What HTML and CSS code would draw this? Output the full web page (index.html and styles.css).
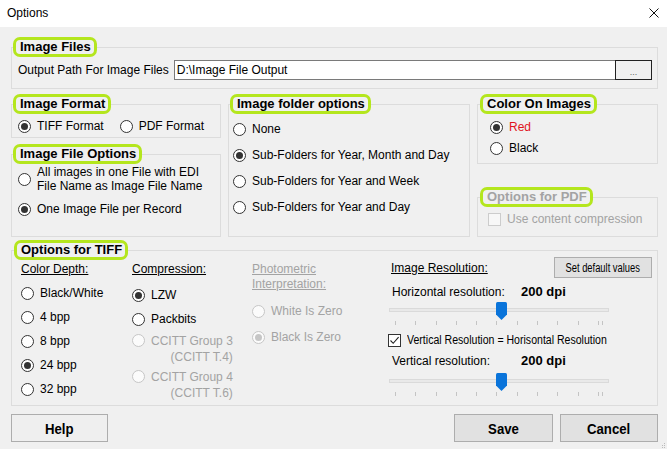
FILE: index.html
```html
<!DOCTYPE html>
<html>
<head>
<meta charset="utf-8">
<title>Options</title>
<link rel="stylesheet" href="styles.css">
</head>
<body>
<div class="window">
  <header class="titlebar">
    <span class="title">Options</span>
    <svg class="close" width="10" height="10" viewBox="0 0 10 10"><path d="M0.5 0.5L9.5 9.5M9.5 0.5L0.5 9.5" stroke="#111" stroke-width="1" fill="none"/></svg>
  </header>
  <main class="content">
    <fieldset class="group g-files">
      <legend class="hl">Image Files</legend>
      <div class="path-row">
        <span class="path-label">Output Path For Image Files</span>
        <span class="textbox">D:\Image File Output</span>
        <span class="browse">...</span>
      </div>
    </fieldset>

    <div class="row2">
      <div class="col col-left">
        <fieldset class="group g-format">
          <legend class="hl">Image Format</legend>
          <div class="inline-opts">
            <span class="opt"><span class="radio on"></span>TIFF Format</span>
            <span class="opt"><span class="radio"></span>PDF Format</span>
          </div>
        </fieldset>
        <fieldset class="group g-fileopts">
          <legend class="hl">Image File Options</legend>
          <div class="opt opt-multi"><span class="radio"></span><span>All images in one File with EDI<br>File Name as Image File Name</span></div>
          <div class="opt opt-single"><span class="radio on"></span>One Image File per Record</div>
        </fieldset>
      </div>

      <fieldset class="group g-folder">
        <legend class="hl">Image folder options</legend>
        <div class="opt folder-opt"><span class="radio"></span>None</div>
        <div class="opt folder-opt"><span class="radio on"></span>Sub-Folders for Year, Month and Day</div>
        <div class="opt folder-opt"><span class="radio"></span>Sub-Folders for Year and Week</div>
        <div class="opt folder-opt"><span class="radio"></span>Sub-Folders for Year and Day</div>
      </fieldset>

      <div class="col col-right">
        <fieldset class="group g-color">
          <legend class="hl">Color On Images</legend>
          <div class="opt color-opt red"><span class="radio on"></span>Red</div>
          <div class="opt color-opt color-black"><span class="radio"></span>Black</div>
        </fieldset>
        <fieldset class="group g-pdf">
          <legend class="hl dis-text">Options for PDF</legend>
          <div class="opt check-opt dis-text"><span class="checkbox dis"></span>Use content compression</div>
        </fieldset>
      </div>
    </div>

    <fieldset class="group g-tiff">
      <legend class="hl">Options for TIFF</legend>
      <div class="tiff-grid">
        <div class="tcol depth">
          <div class="ulabel">Color Depth:</div>
          <div class="opt trow first"><span class="radio"></span>Black/White</div>
          <div class="opt trow"><span class="radio"></span>4 bpp</div>
          <div class="opt trow"><span class="radio"></span>8 bpp</div>
          <div class="opt trow"><span class="radio on"></span>24 bpp</div>
          <div class="opt trow"><span class="radio"></span>32 bpp</div>
        </div>
        <div class="tcol compression">
          <div class="ulabel">Compression:</div>
          <div class="opt trow c-first"><span class="radio on"></span>LZW</div>
          <div class="opt trow"><span class="radio"></span>Packbits</div>
          <div class="opt ccitt dis-text"><span class="radio dis"></span><span class="ccitt-text">CCITT Group 3<br>(CCITT T.4)</span></div>
          <div class="opt ccitt ccitt2 dis-text"><span class="radio dis"></span><span class="ccitt-text">CCITT Group 4<br>(CCITT T.6)</span></div>
        </div>
        <div class="tcol photometric dis-text">
          <div class="ulabel two">Photometric<br>Interpretation:</div>
          <div class="opt trow p-first"><span class="radio dis"></span>White Is Zero</div>
          <div class="opt trow p-second"><span class="radio dis on"></span>Black Is Zero</div>
        </div>
        <div class="tcol resolution">
          <div class="res-head">
            <span class="ulabel">Image Resolution:</span>
            <span class="btn small-btn"><span class="cond-small">Set default values</span></span>
          </div>
          <div class="res-row hres"><span class="res-name">Horizontal resolution:</span><b class="res-val">200 dpi</b></div>
          <div class="slider s1">
            <span class="track"></span>
            <span class="ticks"><i></i><i></i><i></i><i></i><i></i><i></i><i></i><i></i><i></i><i></i><i class="dbl"></i></span>
            <svg class="thumb" style="left:107px" width="11" height="18" viewBox="0 0 11 18"><path d="M0 1.5Q0 0 1.5 0H9.5Q11 0 11 1.5V12.5L5.5 18L0 12.5Z" fill="#0a74da"/></svg>
          </div>
          <div class="opt check-opt linked"><span class="checkbox"><svg width="11" height="11" viewBox="0 0 11 11"><path d="M1.5 5.5L4.2 8.3L9.6 2.2" stroke="#222" stroke-width="1.1" fill="none"/></svg></span><span class="narrow">Vertical Resolution = Horisontal Resolution</span></div>
          <div class="res-row vres"><span class="res-name">Vertical resolution:</span><b class="res-val">200 dpi</b></div>
          <div class="slider s2">
            <span class="track"></span>
            <span class="ticks"><i></i><i></i><i></i><i></i><i></i><i></i><i></i><i></i><i></i><i></i><i class="dbl"></i></span>
            <svg class="thumb" style="left:107px" width="11" height="18" viewBox="0 0 11 18"><path d="M0 1.5Q0 0 1.5 0H9.5Q11 0 11 1.5V12.5L5.5 18L0 12.5Z" fill="#0a74da"/></svg>
          </div>
        </div>
      </div>
    </fieldset>

    <footer class="actions">
      <span class="btn big-btn help"><span class="cond-big">Help</span></span>
      <span class="spacer"></span>
      <span class="btn big-btn save"><span class="cond-big">Save</span></span>
      <span class="btn big-btn cancel"><span class="cond-big">Cancel</span></span>
    </footer>
  </main>
  <svg class="grip" width="5" height="5" viewBox="0 0 5 5"><rect x="3" y="0" width="1" height="1" fill="#bbb"/><rect x="1" y="2" width="1" height="1" fill="#bbb"/><rect x="3" y="2" width="1" height="1" fill="#bbb"/><rect x="1" y="4" width="1" height="1" fill="#bbb"/><rect x="3" y="4" width="1" height="1" fill="#bbb"/></svg>
</div>
</body>
</html>
```

FILE: styles.css
```css
html, body {
  margin: 0;
  padding: 0;
  background: #f0f0f0;
}

.window {
  position: relative;
  width: 667px;
  height: 449px;
  overflow: hidden;
  background: #f0f0f0;
  font-family: "Liberation Sans", Arial, sans-serif;
  font-size: 12px;
  color: #000;
}

.titlebar {
  height: 27px;
  box-sizing: border-box;
  background: #fff;
  display: flex;
  align-items: center;
  justify-content: space-between;
  padding: 0 8px 2px 7px;
}

.title {
  font-size: 12px;
}

.content {
  padding: 10px 9px 0 11px;
}

.group {
  margin: 0;
  padding: 0 5px 0 6px;
  border: 1px solid #dcdcdc;
  min-width: 0;
  box-sizing: border-box;
}

.hl {
  margin-left: -5px;
  padding: 0 3px 0 4px;
  border: 3px solid #b4e61e;
  border-radius: 7px;
  font-weight: bold;
  font-size: 13px;
  line-height: 14px;
  background: #f0f0f0;
}

.dis-text {
  color: #a3a3a3;
}

/* Image files */
.g-files {
  padding: 3px 5px 8px 6px;
}

.path-row {
  display: flex;
  align-items: center;
  height: 20px;
}

.path-label {
  margin-right: 5px;
  white-space: nowrap;
}

.textbox {
  flex: 1;
  height: 20px;
  box-sizing: border-box;
  border: 1px solid #7a7a7a;
  background: #fff;
  padding-left: 2px;
  line-height: 18px;
}

.browse {
  width: 37px;
  height: 20px;
  box-sizing: border-box;
  border: 1px solid #222;
  margin-left: -1px;
  background: #f0f0f0;
  display: flex;
  align-items: flex-end;
  justify-content: center;
  font-size: 9px;
  line-height: 13px;
  color: #666;
}

/* Radios & checkboxes */
.opt {
  display: flex;
  align-items: center;
  line-height: 14px;
  white-space: nowrap;
}

.radio {
  flex: none;
  width: 13px;
  height: 13px;
  box-sizing: border-box;
  border: 1px solid #333;
  border-radius: 50%;
  background: #fff;
  margin-right: 6px;
  position: relative;
}

.radio.on::after {
  content: "";
  position: absolute;
  left: 2px;
  top: 2px;
  width: 7px;
  height: 7px;
  border-radius: 50%;
  background: #333;
}

.radio.dis {
  border-color: #c6c6c6;
  background: #fbfbfb;
}

.radio.dis.on::after {
  background: #c6c6c6;
}

.checkbox {
  flex: none;
  width: 13px;
  height: 13px;
  box-sizing: border-box;
  border: 1px solid #333;
  background: #fff;
  margin-right: 6px;
  display: flex;
  align-items: center;
  justify-content: center;
}

.checkbox.dis {
  border-color: #cccccc;
  background: #f7f7f7;
}

/* Row 2 */
.row2 {
  display: grid;
  grid-template-columns: 210px 242px 1fr;
  column-gap: 7px;
  margin-top: 5px;
}

.col {
  display: flex;
  flex-direction: column;
}

.g-format {
  padding: 5px 5px 4px 6px;
}

.inline-opts {
  display: flex;
  gap: 16px;
}

.g-fileopts {
  flex: 1;
  margin-top: 6px;
  padding: 1px 5px 0 6px;
}

.opt-multi {
  align-items: center;
  white-space: normal;
}

.opt-single {
  margin-top: 9px;
}

.g-folder {
  padding: 2px 5px 16px 4px;
}

.g-folder .hl {
  margin-left: -3px;
}

.folder-opt {
  height: 26px;
}

.g-color {
  padding: 6px 5px 8px 12px;
}

.g-color .hl {
  margin-left: -10px;
}

.color-black {
  margin-top: 7px;
}

.red {
  color: #e0141e;
}

.g-pdf {
  margin-top: auto;
  padding: 5px 5px 10px 10px;
}

.g-pdf .hl {
  margin-left: -8px;
}

/* TIFF */
.g-tiff {
  margin-top: 3px;
  padding: 2px 5px 4px 9px;
}

.g-tiff .hl {
  margin-left: -7px;
}

.tiff-grid {
  display: grid;
  grid-template-columns: 111px 120px 136px 1fr;
}

.ulabel {
  text-decoration: underline;
  line-height: 14px;
}

.ulabel.two {
  line-height: 15px;
}

.trow {
  height: 24px;
}

.depth .first {
  margin-top: 5px;
}

.compression .c-first {
  margin-top: 7px;
}

.ccitt {
  align-items: flex-start;
  line-height: 16px;
  margin-top: 2px;
}

.ccitt .radio {
  margin-top: 1px;
}

.ccitt2 {
  margin-top: 4px;
}

.ccitt-text {
  display: inline-block;
  text-align: right;
}

.photometric .p-first {
  margin-top: 7px;
}

.photometric .p-second {
  margin-top: 2px;
}

.resolution {
  margin-top: -5px;
}

.res-head {
  display: flex;
  align-items: center;
  justify-content: space-between;
  padding-left: 3px;
}

.btn {
  box-sizing: border-box;
  border: 1px solid #adadad;
  background: #e1e1e1;
  display: flex;
  align-items: center;
  justify-content: center;
  white-space: nowrap;
  overflow: hidden;
}

.small-btn {
  width: 98px;
  height: 21px;
}

.cond-small {
  display: inline-block;
  font-size: 12px;
  transform: scaleX(0.78);
  transform-origin: center;
}

.res-row {
  display: flex;
  line-height: 14px;
  padding-left: 4px;
}

.hres {
  margin-top: 7px;
}

.vres {
  margin-top: 7px;
}

.res-name {
  width: 129px;
}

.res-val {
  font-size: 13px;
}

.slider {
  position: relative;
  height: 22px;
  width: 220px;
  margin-left: 1px;
}

.s1 {
  margin-top: 3px;
}

.s2 {
  margin-top: 5px;
}

.track {
  position: absolute;
  left: 0;
  right: 0;
  top: 6px;
  height: 4px;
  box-sizing: border-box;
  border: 1px solid #dadada;
  background: #e9e9e9;
}

.ticks {
  position: absolute;
  left: 6px;
  right: 6px;
  top: 19px;
  height: 4px;
  display: flex;
  justify-content: space-between;
}

.ticks i {
  width: 1px;
  background: #c4c4c4;
}

.ticks i.dbl {
  width: 5px;
  background: none;
  border-left: 1px solid #c4c4c4;
  border-right: 1px solid #c4c4c4;
  box-sizing: border-box;
}

.thumb {
  position: absolute;
  top: 0;
}

.linked {
  margin-top: 9px;
}

.narrow {
  display: inline-block;
  font-size: 12px;
  transform: scaleX(0.88);
  transform-origin: left center;
}

/* Footer buttons */
.actions {
  display: flex;
  gap: 7px;
  margin-top: 8px;
}

.spacer {
  flex: 1;
}

.big-btn {
  height: 28px;
}

.cond-big {
  display: inline-block;
  font-weight: bold;
  font-size: 15px;
  transform: scaleX(0.88);
  transform-origin: center;
}

.help {
  width: 97px;
  background: #efefef;
}

.save {
  width: 99px;
}

.cancel {
  width: 98px;
}

.grip {
  position: absolute;
  right: 1px;
  bottom: 1px;
}
```
